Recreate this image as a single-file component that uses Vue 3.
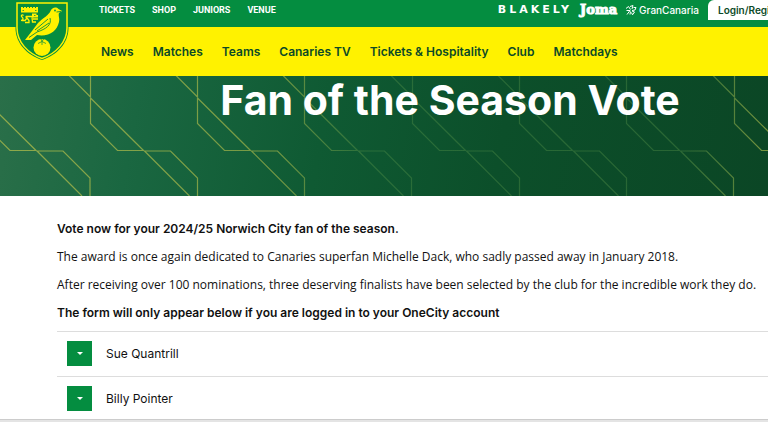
<template>
  <div class="page">
    <header class="site-header">
      <div class="top-bar">
        <nav class="top-links" aria-label="Services">
          <a v-for="link in topLinks" :key="link" href="#">{{ link }}</a>
        </nav>
        <div class="partners">
          <a href="#" class="blakely">BLAKELY</a>
          <a href="#" class="joma">Joma</a>
          <a href="#" class="gran-canaria">
            <svg viewBox="0 0 12 12" width="12" height="12" aria-hidden="true">
              <path
                d="M1 4.500L3.500 2.500L5.500 5.500M5 2.500L8 1.500L7 5M8.500 3.500H11L10 6L7 6.500M1.500 6.500L5 6.500L2 10.500M5.500 7.500L5 10.500M7 7L9.500 8L7.500 10.800L6.500 8.500"
              />
            </svg>
            <span>GranCanaria</span>
          </a>
        </div>
        <a href="#" class="login">Login/Register</a>
      </div>

      <nav class="main-nav" aria-label="Main">
        <a v-for="link in mainLinks" :key="link" href="#">{{ link }}</a>
      </nav>

      <a href="#" class="crest" aria-label="Norwich City">
        <svg viewBox="0 0 54 60" width="54" height="60">
          <path d="M0.500 1.500H53.500V28C53.500 43 42 55 27 60C12 55 0.500 43 0.500 28Z" fill="#048d40" />
          <path
            d="M2 3H52V28C52 42 41 53.500 27 58.500C13 53.500 2 42 2 28Z"
            fill="#048d40"
            stroke="#fff200"
            stroke-width="1.500"
          />
          <!-- castle -->
          <path
            d="M6 7H8V8H9V7H11V8H12V7H14V8H15V7H17V8H18V7H20V8H21V7H23V12.500H6Z"
            fill="#fff200"
          />
          <path d="M7.500 10.500H9M20 10.500H21.500" stroke="#048d40" stroke-width="0.800" />
          <!-- lion -->
          <path
            d="M6 20.500C8.500 20.500 8.500 18 7 17C5.500 15.500 7 14 8.500 15.500M11 16.500H19M10.500 16.500L12 18L10 20.500H7M12 18L14 20.500V22.500H10M17 17.500L17.500 22H21M18 19H23"
            fill="none"
            stroke="#fff200"
            stroke-width="1.300"
          />
          <path d="M17 13.500H21.500V15H23V17.500H17Z" fill="#fff200" />
          <path d="M19 15.500H20.500" stroke="#048d40" stroke-width="0.800" />
          <!-- ball and canary -->
          <circle cx="27" cy="47.500" r="8.500" fill="#fff200" />
          <path
            d="M47 11L43.500 9C41 6.500 37 7.500 35.500 11C34 15 28 18 23 23L17 31L10 40H16L22 35C34 37 42 31 44 22C45 18 43 16 44 13Z"
            fill="#fff200"
          />
          <path
            d="M35 18C37 25 31 29 22 32L14 37.500M33 19L20 30M34 23L22 31M41.500 12L46 11.500"
            fill="none"
            stroke="#048d40"
            stroke-width="0.900"
          />
          <circle cx="40" cy="10.500" r="0.900" fill="#048d40" />
          <path
            d="M25 36L27 41.500L23 43.500M27 41.500V45M27 41.500L31 43.500M31 35L27 41.500"
            fill="none"
            stroke="#048d40"
            stroke-width="0.700"
          />
        </svg>
      </a>
    </header>

    <section class="hero">
      <svg class="hero-pattern" viewBox="0 0 768 120" preserveAspectRatio="xMinYMin slice" aria-hidden="true">
        <defs>
          <linearGradient id="fade" gradientUnits="userSpaceOnUse" x1="0" y1="0" x2="768" y2="0">
            <stop offset="0" stop-color="#a9b84a" stop-opacity="0.800" />
            <stop offset="0.360" stop-color="#a9b84a" stop-opacity="0.650" />
            <stop offset="0.480" stop-color="#5f9a4c" stop-opacity="0.350" />
            <stop offset="0.880" stop-color="#5f9a4c" stop-opacity="0.350" />
            <stop offset="1" stop-color="#a9b84a" stop-opacity="0.700" />
          </linearGradient>
        </defs>
        <path v-for="d in patternPaths" :key="d" :d="d" fill="none" stroke="url(#fade)" stroke-width="1.200" />
      </svg>
      <h1>Fan of the Season Vote</h1>
    </section>

    <main class="content">
      <p><strong>Vote now for your 2024/25 Norwich City fan of the season.</strong></p>
      <p>The award is once again dedicated to Canaries superfan Michelle Dack, who sadly passed away in January 2018.</p>
      <p>After receiving over 100 nominations, three deserving finalists have been selected by the club for the incredible work they do.</p>
      <p><strong>The form will only appear below if you are logged in to your OneCity account</strong></p>

      <ul class="finalists">
        <li v-for="name in finalists" :key="name">
          <button type="button" @click="toggle(name)" :aria-expanded="opened === name">
            <span class="toggle-icon">
              <svg viewBox="0 0 8 4" width="6" height="3" aria-hidden="true">
                <path d="M0 0H8L4 4Z" fill="#fff" />
              </svg>
            </span>
            <span>{{ name }}</span>
          </button>
        </li>
      </ul>
    </main>

    <div class="bottom-bar"></div>
  </div>
</template>

<script setup>
import { ref } from 'vue'

const topLinks = ['TICKETS', 'SHOP', 'JUNIORS', 'VENUE']
const mainLinks = ['News', 'Matches', 'Teams', 'Canaries TV', 'Tickets & Hospitality', 'Club', 'Matchdays']
const finalists = ['Sue Quantrill', 'Billy Pointer']

const opened = ref(null)

const toggle = (name) => {
  opened.value = opened.value === name ? null : name
}

// One repeat of the line pattern, starting at its upper corner
const motif = (x) =>
  `M${x - 22} -1L${x} 21V0M${x} 22V47.500L${x + 27} 74.500H${x + 53}L${x} 22` +
  `M${x + 99} 120L${x + 54} 75H${x + 80}L${x + 107} 102V120`

const patternPaths = [-124, -17, 90.5, 197.5, 304.5, 412.5, 519.5, 626.5, 734.5].map(motif)
</script>

<style>
body {
  margin: 0;
  background: #fff;
}
</style>

<style scoped>
.page {
  font-family: Inter, 'Liberation Sans', sans-serif;
  font-size: 12px;
  color: #111;
  overflow: hidden;
}

a {
  color: inherit;
  text-decoration: none;
}

.site-header {
  position: relative;
}

.top-bar {
  display: flex;
  align-items: flex-start;
  height: 27px;
  padding-left: 99px;
  background: #048d40;
  color: #fff;
  line-height: 20px;
  white-space: nowrap;
}

.top-links {
  display: flex;
  gap: 17px;
  font-family: Roboto, sans-serif;
  font-size: 9px;
  font-weight: 700;
}

.partners {
  display: flex;
  align-items: center;
  gap: 8px;
  margin-left: auto;
  margin-right: 9px;
}

.blakely {
  font-family: 'DejaVu Sans', sans-serif;
  font-size: 11px;
  font-weight: 700;
  letter-spacing: 3px;
}

.joma {
  font-family: 'DejaVu Serif', serif;
  font-size: 13px;
  font-weight: 700;
  -webkit-text-stroke: 1px #fff;
}

.gran-canaria {
  display: flex;
  align-items: center;
  gap: 2px;
  font-size: 10px;
  font-weight: 500;
}

.gran-canaria svg {
  fill: none;
  stroke: #fff;
}

.login {
  flex: 0 0 50px;
  padding-left: 10px;
  overflow: hidden;
  border-top-left-radius: 6px;
  background: #fff;
  color: #0b4a27;
  font-size: 10px;
  font-weight: 600;
}

.main-nav {
  display: flex;
  align-items: center;
  gap: 19px;
  height: 49px;
  padding-left: 101px;
  background: #fff200;
  color: #0b4a27;
  font-weight: 600;
  white-space: nowrap;
}

.crest {
  position: absolute;
  top: 0;
  left: 15px;
}

.crest svg {
  display: block;
}

.hero {
  position: relative;
  height: 120px;
  overflow: hidden;
  background: linear-gradient(100deg, #2a6f49 0%, #1a6741 18%, #0f5a33 42%, #0c4f2a 65%, #0b4625 100%);
}

.hero-pattern {
  position: absolute;
  inset: 0;
  width: 100%;
  height: 100%;
}

h1 {
  position: relative;
  margin: 0;
  padding-left: 132px;
  color: #fff;
  font-size: 41px;
  font-weight: 700;
  line-height: 48px;
  text-align: center;
}

.content {
  padding: 23px 0 0 57px;
  font-family: 'Open Sans', sans-serif;
}

p {
  margin: 0 0 8px;
  line-height: 20px;
  white-space: nowrap;
}

strong {
  font-family: Inter, sans-serif;
  font-weight: 600;
}

.finalists {
  margin: 0;
  padding: 0;
  list-style: none;
}

.finalists li {
  border-top: 1px solid #ddd;
}

.finalists button {
  display: flex;
  align-items: center;
  gap: 14px;
  width: 100%;
  padding: 9px 10px 10px;
  border: 0;
  background: none;
  color: inherit;
  font-family: Inter, sans-serif;
  font-size: 12px;
  text-align: left;
}

.toggle-icon {
  display: flex;
  align-items: center;
  justify-content: center;
  width: 25px;
  height: 25px;
  background: #048d40;
}

.bottom-bar {
  position: fixed;
  right: 0;
  bottom: 0;
  left: 0;
  height: 2px;
  border-top: 1px solid #ccc;
  background: #e4e4e4;
}
</style>
